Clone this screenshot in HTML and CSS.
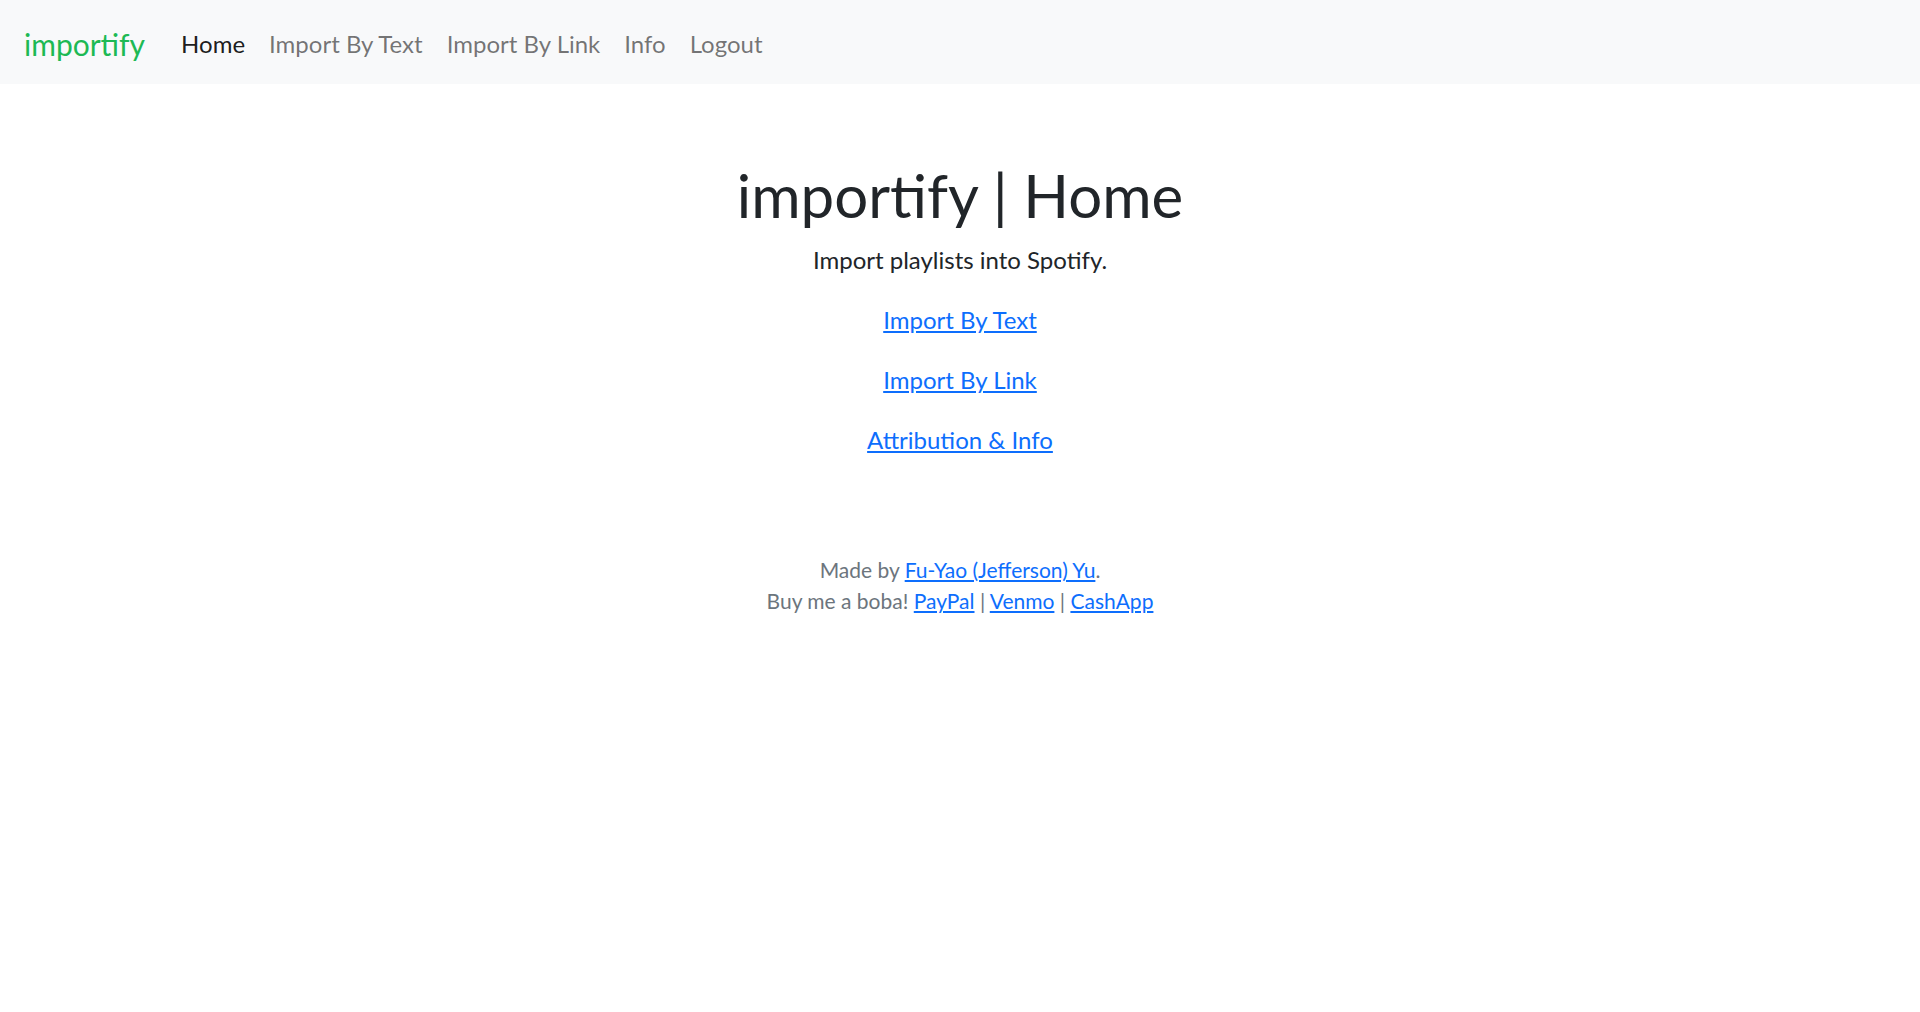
FILE: index.html
```html
<!DOCTYPE html>
<html lang="en">
<head>
<meta charset="utf-8">
<title>importify | Home</title>
<link rel="stylesheet" href="styles.css">
</head>
<body>
<nav class="navbar">
  <div class="navbar-inner">
    <a class="brand" href="#">importify</a>
    <ul class="nav">
      <li><a class="nav-link active" href="#">Home</a></li>
      <li><a class="nav-link" href="#">Import By Text</a></li>
      <li><a class="nav-link" href="#">Import By Link</a></li>
      <li><a class="nav-link" href="#">Info</a></li>
      <li><a class="nav-link" href="#">Logout</a></li>
    </ul>
  </div>
</nav>
<main class="main">
  <h1 class="title">importify | Home</h1>
  <p class="text">Import playlists into Spotify.</p>
  <p class="text"><a class="link" href="#">Import By Text</a></p>
  <p class="text"><a class="link" href="#">Import By Link</a></p>
  <p class="text"><a class="link" href="#">Attribution &amp; Info</a></p>
</main>
<footer class="footer">
  <div>Made by <a class="link" href="#">Fu-Yao (Jefferson) Yu</a>.</div>
  <div>Buy me a boba! <a class="link" href="#">PayPal</a> | <a class="link" href="#">Venmo</a> | <a class="link" href="#">CashApp</a></div>
</footer>
</body>
</html>
```
FILE: styles.css
```css
* { box-sizing: border-box; }
body {
  margin: 0;
  font-family: Lato, "Open Sans", sans-serif;
  font-size: 24px;
  line-height: 1.5;
  color: #212529;
  background: #fff;
}
.navbar {
  background: #f8f9fa;
  padding: 14px 0 10px;
}
.navbar-inner {
  display: flex;
  align-items: center;
  padding: 0 24px;
}
.brand {
  font-size: 30px;
  line-height: 45px;
  padding: 7.5px 0;
  margin-right: 24px;
  color: #1db954;
  text-decoration: none;
}
.nav {
  display: flex;
  list-style: none;
  margin: 0;
  padding: 0;
}
.nav-link {
  display: block;
  padding: 12px;
  color: rgba(0, 0, 0, 0.55);
  text-decoration: none;
}
.nav-link.active { color: rgba(0, 0, 0, 0.9); }
.main {
  margin-top: 72px;
  text-align: center;
}
.title {
  margin: 0 0 11px;
  padding-top: 3px;
  font-size: 60px;
  font-weight: 400;
  line-height: 72px;
}
.text { margin: 0 0 24px; }
.link { color: #0d6efd; text-decoration: underline; }
.footer {
  margin-top: 96px;
  text-align: center;
  font-size: 21px;
  line-height: 31px;
  color: #6c757d;
}
```
